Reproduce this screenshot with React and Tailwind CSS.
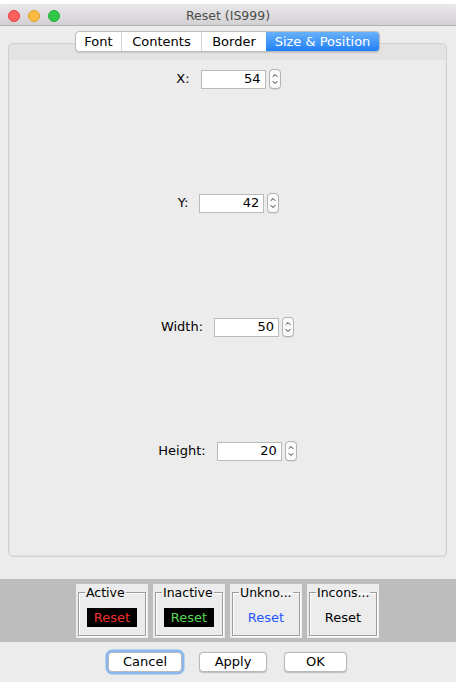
import React from "react";

const font = { fontFamily: '"DejaVu Sans", "Liberation Sans", sans-serif' };

function Spinner() {
  return (
    <div className="w-[12px] h-[20px] rounded-[4px] border border-[#b4b4b4] bg-[#fbfbfb] flex items-center justify-center shadow-[0_0.5px_0.5px_rgba(0,0,0,0.15)]">
      <svg width="8" height="16" viewBox="0 0 8 16">
        <path d="M2 5.5 L4 3.5 L6 5.5" fill="none" stroke="#333" strokeWidth="1" strokeLinecap="round" strokeLinejoin="round" />
        <path d="M2 10.5 L4 12.5 L6 10.5" fill="none" stroke="#333" strokeWidth="1" strokeLinecap="round" strokeLinejoin="round" />
      </svg>
    </div>
  );
}

function Row({ label, value, shift }) {
  return (
    <div className={`flex items-center justify-center h-[20px] ${shift}`}>
      <span className="text-[13px] text-black mr-[11px]">{label}</span>
      <div className="w-[65px] h-[19px] bg-white border border-[#b9b9b9] flex items-center justify-end pr-[4px] text-[13px] text-black">
        {value}
      </div>
      <div className="ml-[3px]">
        <Spinner />
      </div>
    </div>
  );
}

function StatusBox({ title, bg, color }) {
  return (
    <div className="w-[72px] h-[54px] bg-[#ececec] pt-[1px] px-[2px] pb-[2px]">
      <fieldset className="h-full border border-[#9c9c9c] shadow-[inset_1px_1px_0_#ffffff,1px_1px_0_#ffffff] px-[4px]">
        <legend className="ml-[2px] px-[1px] text-[12.5px] leading-[15px] text-black">{title}</legend>
        <div className={`w-[50px] h-[19px] mx-auto mt-[8px] flex items-center justify-center text-[13px] ${bg} ${color}`}>
          Reset
        </div>
      </fieldset>
    </div>
  );
}

function Button({ label, width, focus }) {
  return (
    <div
      className={`${width} h-[20px] bg-white rounded-[4px] border border-[#b8b8b8] flex items-center justify-center text-[13px] text-black shadow-[0_0.5px_1px_rgba(0,0,0,0.2)] ${
        focus ? "ring-[2.5px] ring-[#8ab8ee] border-[#7aa7e0]" : ""
      }`}
    >
      {label}
    </div>
  );
}

export default function App() {
  return (
    <div className="w-[461px] h-[682px] bg-white flex" style={font}>
      <div className="w-[456px] h-[682px] flex flex-col">
        <div className="h-[4px] bg-white" />
        <div className="flex-1 bg-[#ececec] flex flex-col">
          {/* Title bar */}
          <div className="h-[22px] bg-gradient-to-b from-[#e9e7e9] to-[#d3d1d3] border-b border-[#b1b1b1] flex items-center rounded-t-[4px]">
            <div className="flex items-center gap-[8px] pl-[8px] pt-[3px]">
              <div className="w-[12px] h-[12px] rounded-full bg-[#fc605c] border border-[#e1443f]" />
              <div className="w-[12px] h-[12px] rounded-full bg-[#fdbc40] border border-[#de9f2c]" />
              <div className="w-[12px] h-[12px] rounded-full bg-[#34c84a] border border-[#27aa35]" />
            </div>
            <div className="flex-1 text-center text-[12.5px] text-[#4d4d4d] pr-[60px] pt-[3px]">Reset (IS999)</div>
          </div>

          {/* Tabbed pane */}
          <div className="pl-[8px] pr-[9px] pt-[5px]">
            <div className="relative z-10 flex justify-center h-[21px]">
              <div className="flex rounded-[4px] border border-[#bdbdbd] bg-white shadow-[0_1px_1px_rgba(0,0,0,0.12)] overflow-hidden text-[13px] text-black">
                <div className="w-[46px] flex items-center justify-center border-r border-[#d4d4d4]">Font</div>
                <div className="w-[80px] flex items-center justify-center border-r border-[#d4d4d4]">Contents</div>
                <div className="w-[64px] flex items-center justify-center">Border</div>
                <div className="w-[113px] flex items-center justify-center text-white bg-gradient-to-b from-[#68b1fa] to-[#1a7ef6]">
                  Size &amp; Position
                </div>
              </div>
            </div>
            <div className="-mt-[9px] h-[514px] rounded-[5px] border border-[#d0d0d0] bg-[#e3e3e3] pt-[16px] px-[1px] pb-[1px]">
              <div className="h-full bg-[#ececec] flex flex-col pt-[9px]">
                <Row label="X:" value="54" shift="pl-[2px]" />
                <div className="h-[104px]" />
                <Row label="Y:" value="42" shift="pl-[2px]" />
                <div className="h-[104px]" />
                <Row label="Width:" value="50" shift="pl-0" />
                <div className="h-[104px]" />
                <Row label="Height:" value="20" shift="pl-0" />
              </div>
            </div>
          </div>

          {/* Status band */}
          <div className="mt-[22px] h-[63px] bg-[#bdbdbd] flex justify-center gap-[5px] pt-[5px] pr-[1px]">
            <StatusBox title="Active" bg="bg-black" color="text-[#f0302c]" />
            <StatusBox title="Inactive" bg="bg-black" color="text-[#58d558]" />
            <StatusBox title="Unkno..." bg="" color="text-[#1e55ff]" />
            <StatusBox title="Incons..." bg="" color="text-black" />
          </div>

          {/* Buttons */}
          <div className="flex justify-center gap-[17px] pt-[10px] pr-[1px]">
            <Button label="Cancel" width="w-[74px]" focus />
            <Button label="Apply" width="w-[68px]" />
            <Button label="OK" width="w-[63px]" />
          </div>
        </div>
      </div>
    </div>
  );
}
